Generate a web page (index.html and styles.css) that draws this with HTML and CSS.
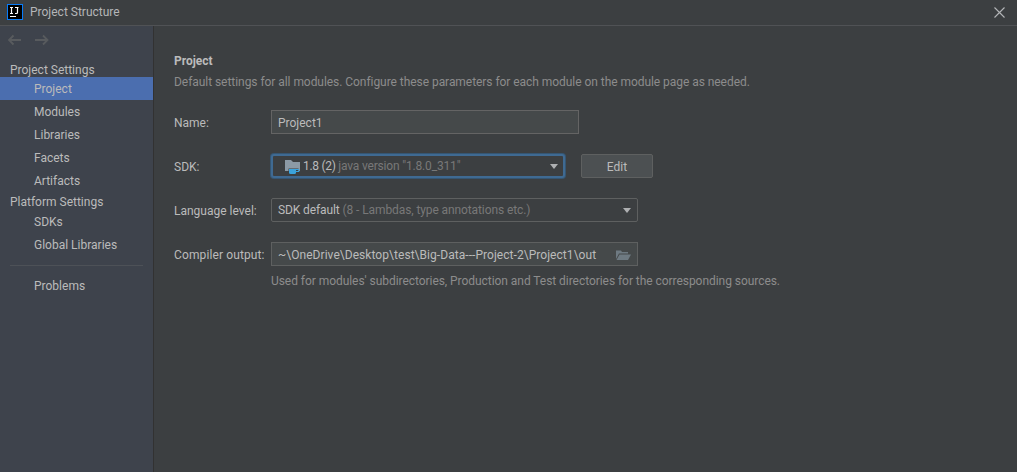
FILE: index.html
```html
<!DOCTYPE html>
<html lang="en">
<head>
<meta charset="utf-8">
<title>Project Structure</title>
<link rel="stylesheet" href="styles.css">
</head>
<body>
<div class="window">
  <header class="titlebar">
    <svg class="logo" width="16" height="16" viewBox="0 0 16 16"><rect x="0.5" y="0.5" width="15" height="15" fill="#000" stroke="#087cfa"/><rect x="3" y="12" width="6" height="1" fill="#fff"/><path d="M3 3.500h3M4.500 3.500v6M3 9.500h3M8 3.500h3.500M10.500 3.500v5q0 1-1 1H8" fill="none" stroke="#fff" stroke-width="1.200"/></svg>
    <span class="title">Project Structure</span>
    <svg class="close" width="11" height="11" viewBox="0 0 11 11"><path d="M0.500 0.500l10 10M10.500 0.500l-10 10" stroke="#b4b6b8" stroke-width="1.100"/></svg>
  </header>
  <div class="main">
    <nav class="sidebar">
      <div class="arrows">
        <svg width="14" height="12" viewBox="0 0 14 12"><path d="M13 6H1M5.500 1.500L1 6l4.500 4.500" fill="none" stroke="#585b5e" stroke-width="1.800"/></svg>
        <svg width="14" height="12" viewBox="0 0 14 12"><path d="M0 6h12.500M8 1.500L12.500 6 8 10.500" fill="none" stroke="#585b5e" stroke-width="1.800"/></svg>
      </div>
      <div class="group">Project Settings</div>
      <div class="item selected">Project</div>
      <div class="item">Modules</div>
      <div class="item">Libraries</div>
      <div class="item">Facets</div>
      <div class="item">Artifacts</div>
      <div class="group group-second">Platform Settings</div>
      <div class="item">SDKs</div>
      <div class="item">Global Libraries</div>
      <div class="divider"></div>
      <div class="item">Problems</div>
    </nav>
    <section class="content">
      <h1 class="heading">Project</h1>
      <p class="hint">Default settings for all modules. Configure these parameters for each module on the module page as needed.</p>
      <div class="form">
        <div class="row row-name">
          <label class="label">Name:</label>
          <div class="field name-field">Project1</div>
        </div>
        <div class="row row-sdk">
          <label class="label">SDK:</label>
          <div class="field combo sdk-combo">
            <svg class="sdk-icon" width="16" height="16" viewBox="0 0 16 16"><path d="M0 2h6l2 2h7v9H0z" fill="#8c9aa5"/><path d="M3.500 10.500h10v6h-10z" fill="#3c3f41"/><path d="M4 11h7v3.500q0 1.500-1.500 1.500h-4Q4 16 4 14.500z" fill="#3ba3dc"/><path d="M11 11.500h3v2h-3" fill="none" stroke="#3ba3dc"/></svg>
            <span class="value">1.8 (2) </span><span class="muted">java version "1.8.0_311"</span>
            <span class="caret"></span>
          </div>
          <button class="button">Edit</button>
        </div>
        <div class="row row-language">
          <label class="label">Language level:</label>
          <div class="field combo language-combo">
            <span class="value">SDK default </span><span class="muted">(8 - Lambdas, type annotations etc.)</span>
            <span class="caret"></span>
          </div>
        </div>
        <div class="row row-output">
          <label class="label">Compiler output:</label>
          <div class="field output-field">
            <span class="value">~\OneDrive\Desktop\test\Big-Data---Project-2\Project1\out</span>
            <svg class="open-icon" width="15" height="12" viewBox="0 0 15 12"><path d="M0 1.500h5l1 1.500h6v1.500H3L0 10z" fill="#6e7a82"/><path d="M3.500 5.500H15L12 11H0.500z" fill="#6e7a82"/></svg>
          </div>
        </div>
        <p class="hint output-hint">Used for modules' subdirectories, Production and Test directories for the corresponding sources.</p>
      </div>
    </section>
  </div>
</div>
</body>
</html>
```

FILE: styles.css
```css
* { box-sizing: border-box; }
html, body { margin: 0; height: 100%; }
body {
  background: #3c3f41;
  color: #bbbbbb;
  font: 12px/16px Roboto, "Noto Sans", sans-serif;
  overflow: hidden;
}
.window { height: 472px; display: flex; flex-direction: column; }
.titlebar {
  height: 26px;
  flex: none;
  display: flex;
  align-items: center;
  padding: 0 12px 1px 7px;
  border-bottom: 1px solid #505255;
  background: #3c3f41;
}
.logo { margin-right: 7px; }
.title { flex: 1; color: #b4b6b8; }
.main { flex: 1; display: flex; min-height: 0; }
.sidebar {
  width: 154px;
  flex: none;
  background: #3e434c;
  border-right: 1px solid #323232;
  display: flex;
  flex-direction: column;
}
.arrows { height: 28px; padding: 8px 0 0 8px; display: flex; gap: 13px; align-items: flex-start; }
.group { height: 23px; padding-left: 10px; line-height: 32px; flex: none; }
.group-second { height: 18px; line-height: 20px; }
.item { height: 23px; flex: none; padding-left: 34px; line-height: 24px; }
.selected { background: #4b6eaf; }
.divider { height: 1px; margin: 9px 10px 8px; background: #4d5157; flex: none; }
.content { flex: 1; padding: 26px 0 0 20px; min-width: 0; }
.heading { margin: 0; font-size: 12px; line-height: 18px; font-weight: 700; color: #bbbbbb; }
.hint { margin: 4px 0 0; color: #8c8c8c; line-height: 16px; white-space: nowrap; letter-spacing: -0.05px; }
.form { margin-top: 20px; }
.row { display: flex; align-items: center; }
.label { width: 97px; flex: none; padding-top: 2px; }
.row-output .label { letter-spacing: 0.12px; }
.row-sdk, .row-language, .row-output { margin-top: 20px; }
.field {
  height: 24px;
  border: 1px solid #646464;
  background: #45494a;
  padding: 1px 6px 0;
  line-height: 23px;
  position: relative;
  white-space: nowrap;
}
.name-field { width: 308px; }
.combo { background: #3c3f41; border-radius: 2px; display: flex; align-items: center; white-space: pre; }
.sdk-combo {
  width: 294px;
  margin: 0 16px 0 0;
  padding-left: 12px;
  border: 2px solid #3f6a92;
  border-radius: 3px;
  box-shadow: 0 0 0 1px #365672;
}
.sdk-icon { margin-right: 2px; margin-top: -1px; }
.language-combo { width: 367px; border-color: #5e6060; }
.muted { color: #787878; letter-spacing: -0.1px; }
.value { letter-spacing: -0.1px; }
.sdk-combo .value { letter-spacing: -0.3px; }
.sdk-combo .muted { letter-spacing: -0.17px; }
.output-field .value { letter-spacing: 0.05px; }
.caret {
  position: absolute;
  right: 6px;
  top: 9px;
  border-left: 4.500px solid transparent;
  border-right: 4.500px solid transparent;
  border-top: 5px solid #aeb0b2;
}
.sdk-combo .caret { right: 5px; top: 8px; }
.button {
  width: 72px;
  height: 24px;
  background: #4c5052;
  border: 1px solid #5e6060;
  border-radius: 2px;
  color: #bbbbbb;
  font: inherit;
  padding: 1px 0 0;
}
.output-field { width: 367px; border-color: #5e6060; }
.open-icon { position: absolute; right: 6px; top: 6px; }
.output-hint { margin: 7px 0 0 97px; }
```
